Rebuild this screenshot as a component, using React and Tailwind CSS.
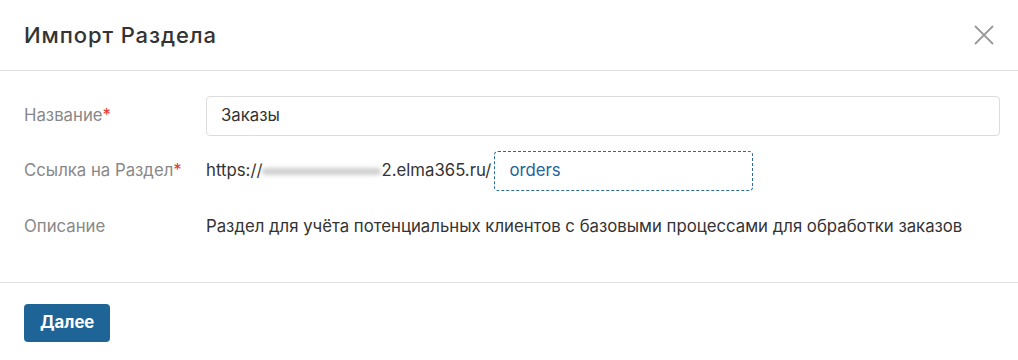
const font = { fontFamily: 'Inter, "Liberation Sans", sans-serif' };

export default function App() {
  return (
    <div className="w-[1018px] h-[360px] bg-white text-[#333]" style={font}>
      {/* Шапка */}
      <div className="h-[71px] flex items-center justify-between pl-6 pr-6 border-b border-[#e0e0e0]">
        <h2 className="text-[22px] tracking-[0.9px] font-medium text-[#333]">Импорт Раздела</h2>
        <svg width="20" height="20" viewBox="0 0 20 20" className="text-[#999]">
          <path d="M1 1 L19 19 M19 1 L1 19" stroke="currentColor" strokeWidth="1.8" fill="none" />
        </svg>
      </div>

      {/* Форма */}
      <div className="h-[212px] border-b border-[#e0e0e0] pt-[25px] pl-6 pr-[18px] text-[16.75px]">
        <div className="flex items-center h-[40px]">
          <div className="w-[182px] text-[#888]">
            Название<span className="text-[#e53935]">*</span>
          </div>
          <div className="flex-1 h-[40px] border border-[#ddd] rounded px-[14px] flex items-center text-[#333]">
            Заказы
          </div>
        </div>

        <div className="flex items-center h-[40px] mt-[15px]">
          <div className="w-[182px] text-[#888]">
            Ссылка на Раздел<span className="text-[#e53935]">*</span>
          </div>
          <div className="flex items-center text-[#333]">
            <span>https://</span>
            <span className="relative inline-block w-[119px] h-[18px]">
              <span className="absolute left-0 right-0 top-[6px] h-[7px] bg-[#cfcfcf] rounded-full blur-[2px]" />
            </span>
            <span>2.elma365.ru/</span>
          </div>
          <div className="ml-[3px] w-[259px] h-[40px] border border-dashed border-[#2a6a9a] rounded px-[14px] flex items-center text-[#1f6496]">
            orders
          </div>
        </div>

        <div className="flex items-center h-[40px] mt-[16px]">
          <div className="w-[182px] text-[#888]">Описание</div>
          <div className="text-[#333]">
            Раздел для учёта потенциальных клиентов с базовыми процессами для обработки заказов
          </div>
        </div>
      </div>

      {/* Кнопки */}
      <div className="pl-6 pt-[21px]">
        <button className="h-[38px] px-[16px] rounded bg-[#1f6496] text-white text-[16.75px] font-bold">
          Далее
        </button>
      </div>
    </div>
  );
}
